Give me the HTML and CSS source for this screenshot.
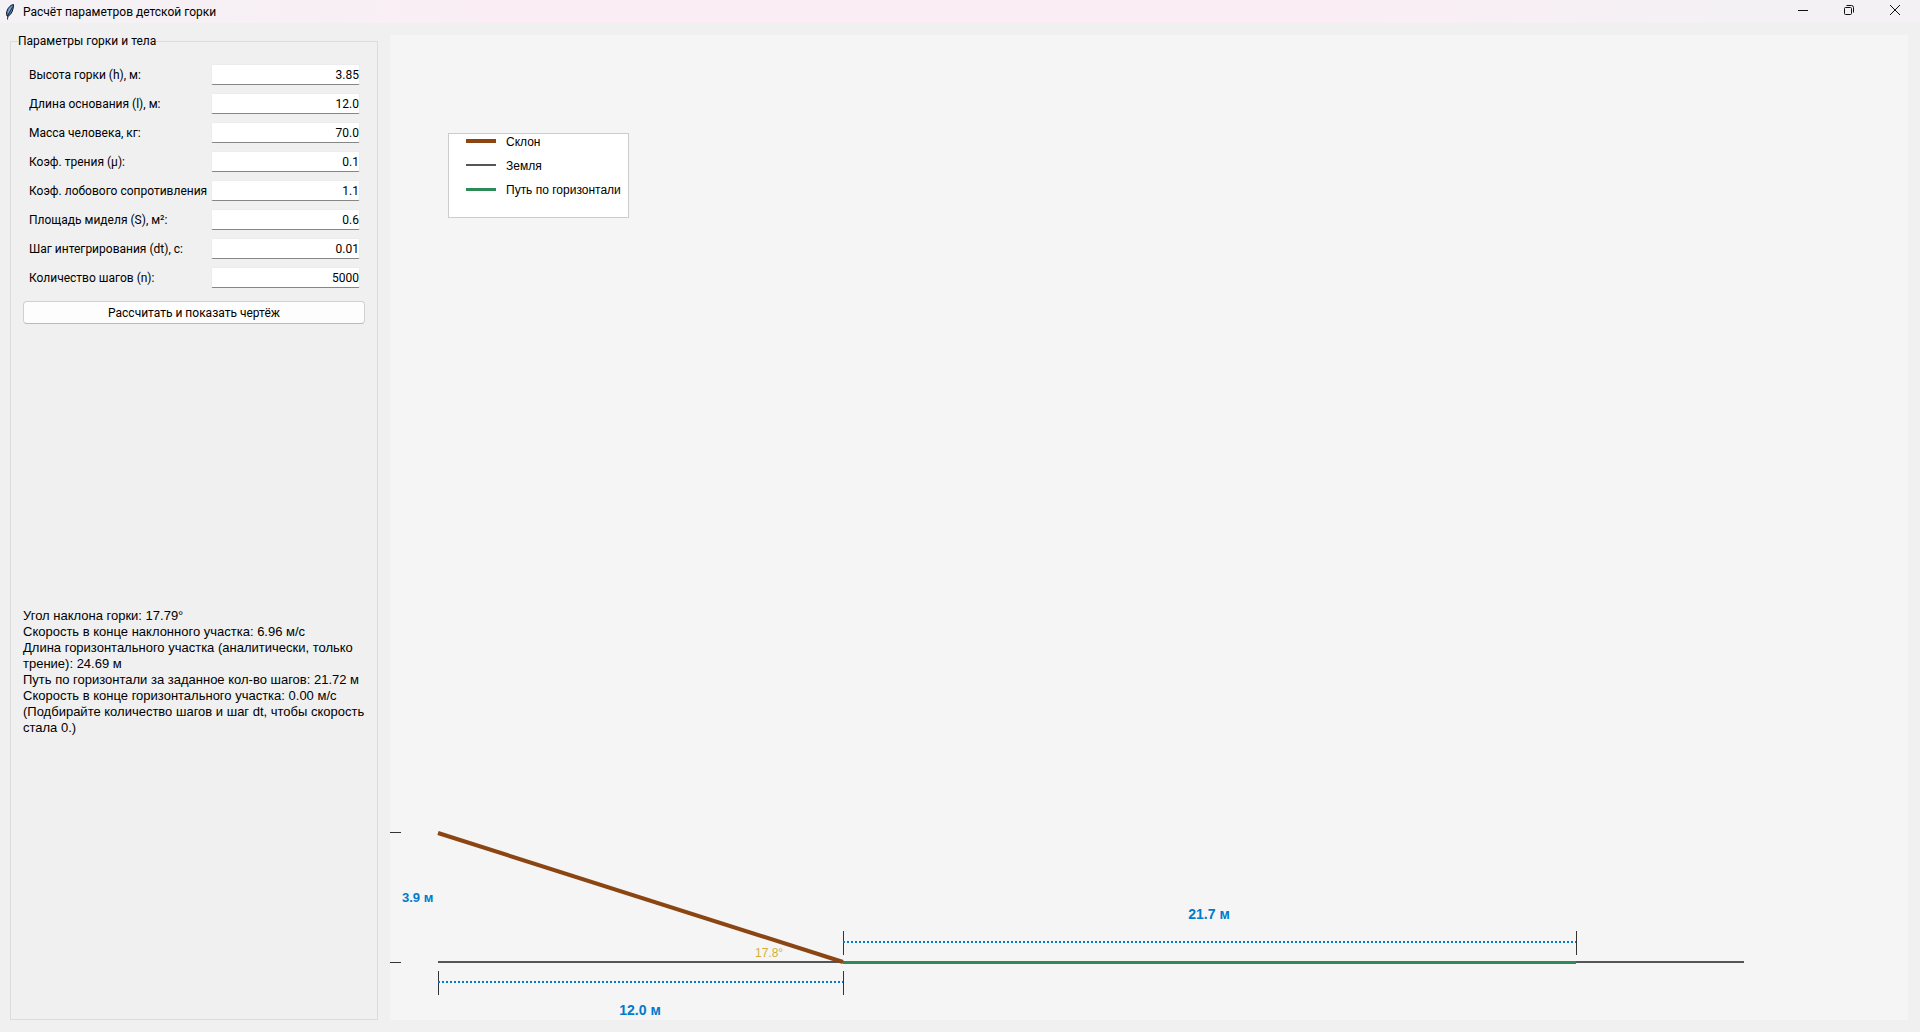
FILE: index.html
```html
<!DOCTYPE html>
<html lang="ru">
  <head>
    <meta charset="UTF-8" />
    <meta name="viewport" content="width=device-width, initial-scale=1.0" />
    <title>Расчёт параметров детской горки</title>
    <link rel="stylesheet" href="styles.css" />
  </head>
  <body>
    <header class="titlebar">
      <svg class="feather" width="12" height="16" viewBox="0 0 12 16" aria-hidden="true">
        <path d="M9.5 0.5C6 1 3 5 2.500 9L3 12L4.500 12C8 10 9.500 5 9.500 0.500Z" fill="#4f86cf" stroke="#15181f" stroke-width="1" />
        <path d="M8 3C6.500 4 5 6 4.500 9" fill="none" stroke="#7fb2ea" stroke-width="1.500" />
        <path d="M8.500 3L4 11L3.500 15.500" fill="none" stroke="#222" stroke-width="1" />
      </svg>
      <h1 class="title">Расчёт параметров детской горки</h1>
      <div class="window-buttons">
        <button type="button" aria-label="Свернуть">
          <svg width="12" height="12" viewBox="0 0 12 12"><path d="M1 6.500H11" /></svg>
        </button>
        <button type="button" aria-label="Восстановить">
          <svg width="12" height="12" viewBox="0 0 12 12">
            <rect x="1.500" y="3.500" width="7" height="7" rx="1" />
            <path d="M3.500 1.500H8.500Q10.500 1.500 10.500 3.500V8.500" />
          </svg>
        </button>
        <button type="button" aria-label="Закрыть">
          <svg width="12" height="12" viewBox="0 0 12 12"><path d="M1 1L11 11M11 1L1 11" /></svg>
        </button>
      </div>
    </header>

    <main class="workspace">
      <form class="panel">
        <h2 class="panel-title">Параметры горки и тела</h2>
        <div class="fields">
          <div class="field">
            <label for="height">Высота горки (h), м:</label>
            <input id="height" type="text" value="3.85" />
          </div>
          <div class="field">
            <label for="base">Длина основания (l), м:</label>
            <input id="base" type="text" value="12.0" />
          </div>
          <div class="field">
            <label for="mass">Масса человека, кг:</label>
            <input id="mass" type="text" value="70.0" />
          </div>
          <div class="field">
            <label for="friction">Коэф. трения (μ):</label>
            <input id="friction" type="text" value="0.1" />
          </div>
          <div class="field">
            <label for="drag">Коэф. лобового сопротивления</label>
            <input id="drag" type="text" value="1.1" />
          </div>
          <div class="field">
            <label for="area">Площадь миделя (S), м²:</label>
            <input id="area" type="text" value="0.6" />
          </div>
          <div class="field">
            <label for="step">Шаг интегрирования (dt), с:</label>
            <input id="step" type="text" value="0.01" />
          </div>
          <div class="field">
            <label for="count">Количество шагов (n):</label>
            <input id="count" type="text" value="5000" />
          </div>
        </div>
        <button class="calc-btn" type="button">Рассчитать и показать чертёж</button>
        <div class="results">
          <div>
            <p>Угол наклона горки: 17.79°</p>
            <p>Скорость в конце наклонного участка: 6.96 м/с</p>
            <p>Длина горизонтального участка (аналитически, только трение): 24.69 м</p>
            <p>Путь по горизонтали за заданное кол-во шагов: 21.72 м</p>
            <p>Скорость в конце горизонтального участка: 0.00 м/с</p>
            <p>(Подбирайте количество шагов и шаг dt, чтобы скорость стала 0.)</p>
          </div>
        </div>
      </form>

      <section class="drawing">
        <svg viewBox="0 0 1518 985" preserveAspectRatio="xMinYMax meet" role="img" aria-label="Чертёж горки">
          <!-- legend -->
          <rect class="legend-box" x="58.5" y="98.5" width="180" height="84" />
          <path class="slope" d="M76 106H106" />
          <path class="ground" d="M76 130H106" />
          <path class="path" d="M76 154.5H106" />
          <text class="legend-text" x="116" y="111">Склон</text>
          <text class="legend-text" x="116" y="135">Земля</text>
          <text class="legend-text" x="116" y="159">Путь по горизонтали</text>

          <!-- slide -->
          <path class="ground" d="M48 927H1354" />
          <path class="path" d="M453 927.5H1186" />
          <path class="slope" d="M48 798L453 927" />
          <text class="angle" x="365" y="922">17.8°</text>

          <!-- dimensions -->
          <path class="tick" d="M0 797.5H11M0 927.5H11" />
          <text class="dim-small" x="12" y="867">3.9 м</text>
          <path class="tick" d="M48.5 936V960M453.5 936V960" />
          <path class="dim-line" d="M48 947H453" />
          <text class="dim" x="250" y="980">12.0 м</text>
          <path class="tick" d="M453.5 896V920M1186.5 896V920" />
          <path class="dim-line" d="M453 907H1186" />
          <text class="dim" x="819" y="884">21.7 м</text>
        </svg>
      </section>
    </main>
  </body>
</html>
```

FILE: styles.css
```css
:root {
  --bg: #f0f0f0;
  --canvas: #f5f5f5;
  --border: #dcdcdc;
  --blue: #007acc;
  --ui-font: Roboto, "Noto Sans", sans-serif;
  --canvas-font: "Liberation Sans", Arial, sans-serif;
}

* {
  margin: 0;
  padding: 0;
  box-sizing: border-box;
}

body {
  min-height: 100vh;
  display: flex;
  flex-direction: column;
  background: var(--bg);
  color: #000;
  font-family: var(--ui-font);
  font-size: 12px;
  line-height: 16px;
}

.titlebar {
  display: flex;
  align-items: center;
  height: 23px;
  padding: 0 2px 0 4px;
  background: linear-gradient(90deg, #f4f2f4, #faeef4 25%, #faeef4 70%, #f4f1f4 90%);
}

.title {
  flex: 1;
  margin-left: 7px;
  font-size: 12px;
  font-weight: 400;
}

.window-buttons {
  display: flex;
  align-self: flex-start;
  height: 20px;
}

.window-buttons button {
  width: 46px;
  border: none;
  background: none;
}

.window-buttons svg {
  display: block;
  margin: auto;
  fill: none;
  stroke: #111;
}

.workspace {
  flex: 1;
  display: flex;
  gap: 12px;
  padding: 12px 12px 12px 10px;
}

.panel {
  flex: 0 0 368px;
  min-width: 0;
  display: flex;
  flex-direction: column;
  margin-top: 6px;
  padding: 0 12px 10px;
  border: 1px solid var(--border);
}

.panel-title {
  align-self: flex-start;
  margin: -9px 0 15px -5px;
  background: var(--bg);
  font-size: 12px;
  font-weight: 400;
}

.fields {
  display: flex;
  flex-direction: column;
  gap: 8px;
  padding: 0 5px 0 6px;
}

.field {
  display: flex;
  align-items: center;
}

.field label {
  flex: 1;
  overflow: hidden;
  white-space: nowrap;
}

.field input {
  width: 149px;
  height: 21px;
  border: 1px solid #ececec;
  border-bottom-color: #868686;
  border-radius: 2px;
  background: #fff;
  font: inherit;
  text-align: right;
}

.calc-btn {
  height: 23px;
  margin-top: 13px;
  border: 1px solid #d0d0d0;
  border-bottom-color: #bababa;
  border-radius: 4px;
  background: #fdfdfd;
  font: inherit;
}

.results {
  flex: 1;
  display: flex;
  align-items: center;
  padding-top: 10px;
  font-family: var(--canvas-font);
  font-size: 13px;
}

.drawing {
  flex: 1;
  background: var(--canvas);
}

.drawing svg {
  display: block;
  width: 100%;
  font-family: var(--canvas-font);
}

.drawing path {
  fill: none;
}

.legend-box {
  fill: #fff;
  stroke: #ccc;
}

.drawing .slope {
  stroke: #8b4513;
  stroke-width: 4;
}

.drawing .ground {
  stroke: #555;
  stroke-width: 2;
}

.drawing .path {
  stroke: #2e8b57;
  stroke-width: 3;
}

.tick {
  stroke: #333;
}

.dim-line {
  stroke: var(--blue);
  stroke-width: 2;
  stroke-dasharray: 2 2;
}

.legend-text {
  font-size: 12px;
}

.angle {
  fill: #d4af37;
  font-size: 12px;
}

.dim,
.dim-small {
  fill: var(--blue);
  font-weight: 700;
}

.dim {
  font-size: 14px;
  text-anchor: middle;
}

.dim-small {
  font-size: 13px;
}
```
